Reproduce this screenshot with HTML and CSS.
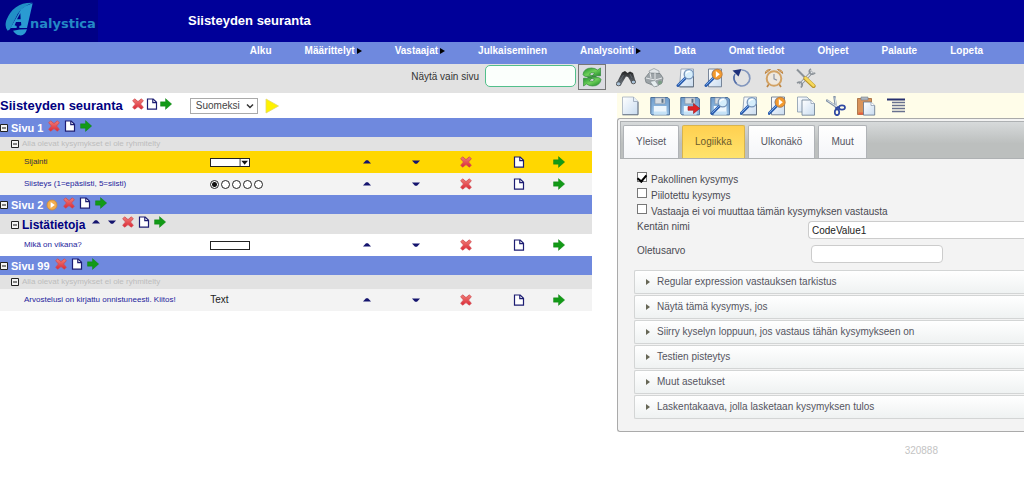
FILE: index.html
```html
<!DOCTYPE html>
<html lang="fi">
<head>
<meta charset="utf-8">
<title>Analystica – Siisteyden seuranta</title>
<meta name="viewport" content="width=device-width, initial-scale=1">
<link rel="stylesheet" href="styles.css">
</head>
<body>
<svg class="sprite" aria-hidden="true">
  <defs>
    <linearGradient id="g-paper" x1="0" y1="0" x2="1" y2="1"><stop offset="0" stop-color="#fff"/><stop offset="1" stop-color="#c9dcf0"/></linearGradient>
    <linearGradient id="g-disk" x1="0" y1="0" x2="0" y2="1"><stop offset="0" stop-color="#6f9ccb"/><stop offset="1" stop-color="#9cc4e8"/></linearGradient>
    <linearGradient id="g-red" x1="0" y1="0" x2="0" y2="1"><stop offset="0" stop-color="#f08078"/><stop offset="1" stop-color="#dc2836"/></linearGradient>
    <linearGradient id="g-green" x1="0" y1="0" x2="1" y2="1"><stop offset="0" stop-color="#1c8f2c"/><stop offset=".5" stop-color="#6fd05a"/><stop offset="1" stop-color="#168424"/></linearGradient>
    <linearGradient id="g-dark" x1="0" y1="0" x2="0" y2="1"><stop offset="0" stop-color="#222"/><stop offset="1" stop-color="#777f88"/></linearGradient>

    <symbol id="i-x" viewBox="0 0 12 12"><path d="M2.6 .8 6 3.6 9.4.8 11.3 2.8 8.5 6l2.8 3.2-1.9 2L6 8.6 2.6 11.2l-1.9-2L3.5 6 .7 2.8Z" fill="url(#g-red)" stroke="#d04a50" stroke-width=".8" stroke-linejoin="round"/></symbol>
    <symbol id="i-page" viewBox="0 0 12 12"><path d="M1.500 1h5.700l3.300 3.200v7H1.500Z" fill="#fff" stroke="#1c1c72" stroke-width="1.200"/><path d="M6.800 1v3.600h3.700" fill="none" stroke="#1c1c72" stroke-width="1.200"/></symbol>
    <symbol id="i-go" viewBox="0 0 12 12"><path d="M.5 3.800h5V.6L11.700 6 5.500 11.400V8.200h-5Z" fill="#129a16" stroke="#0c7d12" stroke-width=".4"/></symbol>
    <symbol id="i-up" viewBox="0 0 12 12"><path d="M2 7.500h8L7 4.300H5Z" fill="#14146e"/></symbol>
    <symbol id="i-down" viewBox="0 0 12 12"><path d="M2 4.500h8L7 7.700H5Z" fill="#14146e"/></symbol>
    <symbol id="i-minus" viewBox="0 0 8 8"><path d="M.5.5h7v7h-7Z" fill="#f4f4f4" stroke="#222"/><path d="M2 4h4" stroke="#111"/></symbol>
    <symbol id="i-playdot" viewBox="0 0 12 12"><circle cx="6" cy="6" r="5" fill="#f3ad4e" stroke="#cf8a36" stroke-width=".8"/><path d="M4.600 3v6L8.800 6Z" fill="#fff"/></symbol>

    <symbol id="i-doc" viewBox="0 0 20 20"><path d="M2.500 1h11l4.500 4.500V18.500H2.500Z" fill="url(#g-paper)" stroke="#a3afbd" stroke-width=".8"/><path d="M2.500 18.800H18V6" fill="none" stroke="#667383" stroke-width="1"/><path d="M13.500 1v4.500H18" fill="#e6eef8" stroke="#97a5b6" stroke-width=".8"/></symbol>
    <symbol id="i-disk" viewBox="0 0 20 20"><path d="M.8 1.500h17l1.600 1.600V18.900H2L.8 17.700Z" fill="url(#g-disk)" stroke="#4c6f99"/><path d="M5 1.800h10v6H5Z" fill="#d6dce2" stroke="#8796a6" stroke-width=".6"/><path d="M11.500 2.800h2v4h-2Z" fill="#5d7287"/><path d="M3.800 10h12.700v8.500H3.800Z" fill="#edf6fd"/><path d="M4 15.500h12.300v3H4Z" fill="#c6e3f7"/></symbol>
    <symbol id="i-diskgo" viewBox="0 0 20 20"><use href="#i-disk"/><path d="M8 10.600h5.500V7.500l6.300 5-6.300 5v-3.200H8Z" fill="#df2224" stroke="#9c1518" stroke-width=".6"/></symbol>
    <symbol id="i-lens" viewBox="0 0 20 20"><path d="M10 9.500 2 17.500" stroke="#2c5eae" stroke-width="3" stroke-linecap="round"/><path d="M9.500 9.500 2.200 16.800" stroke="#7cabea" stroke-width="1"/><circle cx="12.800" cy="6.200" r="4.600" fill="#d5edfb" stroke="#7896bb" stroke-width="1.300"/><path d="M10 5.500q1.500-2.700 4.200-2" fill="none" stroke="#fff" stroke-width="1.300"/></symbol>
    <symbol id="i-disklens" viewBox="0 0 20 20"><use href="#i-disk"/><use href="#i-lens"/></symbol>
    <symbol id="i-find" viewBox="0 0 20 20"><path d="M5 1h12.500v17.800H3.500Z" fill="url(#g-paper)" stroke="#8595a9" stroke-width=".8"/><path d="M3.500 18.900h14V8" fill="none" stroke="#5f6c7d" stroke-width=".9"/><use href="#i-lens"/></symbol>
    <symbol id="i-findplay" viewBox="0 0 20 20"><path d="M4.500 1h13v17.800h-13Z" fill="url(#g-paper)" stroke="#6c7b90" stroke-width=".9"/><use href="#i-lens"/><circle cx="13.200" cy="6.200" r="5" fill="#f39a2d" stroke="#b97d42" stroke-width=".9"/><path d="M11.800 3v6.400l4-3.200Z" fill="#fff"/></symbol>
    <symbol id="i-copy" viewBox="0 0 20 20"><path d="M1.500 1h9.500l3 3v12H1.500Z" fill="url(#g-paper)" stroke="#8798ac" stroke-width=".8"/><path d="M6 4h9l3.500 3.500v11.700H6Z" fill="url(#g-paper)" stroke="#687b91" stroke-width=".8"/><path d="M15 4v3.500h3.500" fill="#fff" stroke="#8798ac" stroke-width=".7"/></symbol>
    <symbol id="i-cut" viewBox="0 0 20 20"><path d="m1 4.500 12 8M8.500.800l1.700 12" stroke="#8494a7" stroke-width="2.400" stroke-linecap="round"/><path d="m1.500 4.500 10 6.500M9 1.500l1.400 10" stroke="#e8eef4" stroke-width=".9"/><ellipse cx="16" cy="11.500" rx="3" ry="2.200" fill="none" stroke="#3049a3" stroke-width="1.700"/><ellipse cx="11" cy="16.300" rx="2.200" ry="2.900" fill="none" stroke="#3049a3" stroke-width="1.700"/><path d="M9.500 12.500 13 11" stroke="#3049a3" stroke-width="2"/></symbol>
    <symbol id="i-paste" viewBox="0 0 20 20"><path d="M1.500 2.500h14v16h-14Z" fill="#d9935a" stroke="#9f6639" stroke-width=".8"/><path d="M2.500 16.500h6v2h-6Z" fill="#e95f3f"/><path d="M5 1h7v3H5Z" fill="#aeb6bf" stroke="#75808b" stroke-width=".6"/><path d="M7.500 6h7.500l3.700 3.500v9.600H7.500Z" fill="url(#g-paper)" stroke="#607189" stroke-width=".8"/><path d="M15 6v3.500h3.700" fill="#fff" stroke="#8798ac" stroke-width=".7"/></symbol>
    <symbol id="i-list" viewBox="0 0 20 20"><path d="M1 3.500h18" stroke="#26306f" stroke-width="2"/><path d="M6 6.500h13M6 9.500h13M6 12.500h13M6 15.500h13" stroke="#68718f" stroke-width="1.400"/></symbol>
    <symbol id="i-refresh" viewBox="0 0 20 20"><path d="M1 7.500Q2 1 9.500 1q3.500 0 6 2L18.500 1v7.800H10l2.700-2.700Q9 4.800 7.300 7.200q3 2.300 7.200 2.500H6Q1.500 9.700 1 7.500Z" fill="url(#g-green)" stroke="#23802d" stroke-width=".6"/><path d="M19 12.500Q18 19 10.500 19q-3.500 0-6-2L1.500 19v-7.800H10l-2.700 2.700q3.700 1.300 5.400-1.100-3-2.300-7.200-2.500H14q4.500 0 5 2.200Z" fill="url(#g-green)" stroke="#23802d" stroke-width=".6"/></symbol>
    <symbol id="i-binoc" viewBox="0 0 20 20"><path d="M6 4.500 9 3l2.500 2L14 3.500l3 1.500 2.500 8-3.800 2.200L12 9l-2-.5-5.500 9.300-4-2.500Z" fill="url(#g-dark)"/><ellipse cx="2.600" cy="15.800" rx="2.400" ry="2" fill="#a9c2d8" stroke="#444" stroke-width=".8"/><ellipse cx="17.400" cy="14" rx="2.200" ry="1.800" fill="#a9c2d8" stroke="#444" stroke-width=".8"/><path d="m7.500 7-3 5M14 6l2 4" stroke="#666e77" stroke-width=".8"/></symbol>
    <symbol id="i-print" viewBox="0 0 20 20"><path d="M6 6 5 3l5-2.500 5 2.500v4Z" fill="#e2e6e8" stroke="#969da2" stroke-width=".8"/><path d="m1 10 4-5 11 .500 3 4.500-1 5-6 3.500-10-4Z" fill="#9da4a8" stroke="#757d82" stroke-width=".8"/><path d="m2 10 9 2 7-2M11 12v6M6 5l1 5M11 5v6" fill="none" stroke="#e6e9ea"/><path d="m6 13.500 5-1 3.500 5-4.500 1.500Z" fill="#e7eef0" stroke="#838b90" stroke-width=".6"/><circle cx="16" cy="14.500" r="2" fill="#7b9d85"/></symbol>
    <symbol id="i-undo" viewBox="0 0 20 20"><path d="M9.500 2a8 8 0 1 1-7.400 6" fill="none" stroke="#8296bd" stroke-width="1.700"/><path d="M4.500 15.500A8 8 0 0 1 3 6" fill="none" stroke="#526da8" stroke-width="1.500"/><path d="M.5 2.500 9.500 1 6.500 8.500Z" fill="#1d2f79"/></symbol>
    <symbol id="i-alarm" viewBox="0 0 20 20"><path d="m5 16-2 3M15 16l2 3" stroke="#bd8646" stroke-width="1.700"/><path d="M1.300 5.500q.2-4 5.200-4ZM18.700 5.500q-.2-4-5.200-4Z" fill="#edc284" stroke="#bd8646"/><circle cx="10" cy="10.500" r="7.300" fill="#eee8df" stroke="#d2a264" stroke-width="2"/><path d="M10 6v4.800l3 1.500" fill="none" stroke="#8a92a1" stroke-width="1.100"/></symbol>
    <symbol id="i-tools" viewBox="0 0 20 20"><path d="M16.500 3.500 4 16.500" stroke="#858c93" stroke-width="3.200"/><path d="M16.500 3.500 4 16.500" stroke="#e5e8ea" stroke-width="1.500"/><path d="M15 .8q-3 2-.8 4.800 2.600 1.700 5-.8M1 15q3-2 5 .5 1 2-1.200 4" fill="none" stroke="#8b9298" stroke-width="1.600"/><path d="m1 1.500 8 8" stroke="#8b9298" stroke-width="2"/><path d="m9.500 10.500 8 7.500" stroke="#b9932a" stroke-width="4.200" stroke-linecap="round"/><path d="m9.500 10 8 7.500" stroke="#f5d85a" stroke-width="2.600" stroke-linecap="round"/></symbol>
  </defs>
</svg>

<header class="banner">
  <a class="logo" href="#" aria-label="Analystica">
    <svg class="logo-mark" viewBox="0 0 90 102" aria-hidden="true">
      <path d="M83 2Q25 0 4 55-2 75 8 86l7-4L38 36Q52 14 83 2Z" fill="#2190c6"/>
      <path fill-rule="evenodd" d="M83 4 66 78H43v-6l6-2-1-10H33l-4 10 6 2v6H16l5-8 27-48Q62 10 83 4ZM36 52h11l-1-18Z" fill="#2a9bd2"/>
      <path d="M24 86q20-4 42-4-6 20-22 18-12-2-20-14Z" fill="#2a9bd2"/>
    </svg>
    <span class="logo-text">nalystica</span>
  </a>
  <h1 class="banner-title">Siisteyden seuranta</h1>
</header>

<nav class="menu">
  <a href="#">Alku</a>
  <a href="#" class="has-sub">Määrittelyt</a>
  <a href="#" class="has-sub">Vastaajat</a>
  <a href="#">Julkaiseminen</a>
  <a href="#" class="has-sub">Analysointi</a>
  <a href="#">Data</a>
  <a href="#">Omat tiedot</a>
  <a href="#">Ohjeet</a>
  <a href="#">Palaute</a>
  <a href="#">Lopeta</a>
</nav>

<div class="toolbar">
  <div class="page-filter">
    <label for="page-only">Näytä vain sivu</label>
    <input id="page-only" class="filter-input" type="text">
    <button class="refresh" type="button" aria-label="Päivitä"><svg><use href="#i-refresh"/></svg></button>
  </div>
  <div class="tool-groups">
    <div class="tool-group">
      <button class="tool" type="button" aria-label="Etsi"><svg><use href="#i-binoc"/></svg></button>
      <button class="tool" type="button" aria-label="Tulosta"><svg><use href="#i-print"/></svg></button>
    </div>
    <div class="tool-group">
      <button class="tool" type="button" aria-label="Esikatsele"><svg><use href="#i-find"/></svg></button>
      <button class="tool" type="button" aria-label="Esikatsele ja testaa"><svg><use href="#i-findplay"/></svg></button>
      <button class="tool" type="button" aria-label="Kumoa"><svg><use href="#i-undo"/></svg></button>
    </div>
    <div class="tool-group">
      <button class="tool" type="button" aria-label="Ajastus"><svg><use href="#i-alarm"/></svg></button>
    </div>
    <div class="tool-group">
      <button class="tool" type="button" aria-label="Työkalut"><svg><use href="#i-tools"/></svg></button>
    </div>
  </div>
</div>

<main class="workspace">
  <section class="outline">
    <div class="survey-head">
      <h2 class="survey-title">Siisteyden seuranta</h2>
      <div class="row-actions">
        <button type="button" aria-label="Poista"><svg><use href="#i-x"/></svg></button>
        <button type="button" aria-label="Uusi"><svg><use href="#i-page"/></svg></button>
        <button type="button" aria-label="Siirry"><svg><use href="#i-go"/></svg></button>
      </div>
      <span class="lang">
        <select aria-label="Kieli"><option>Suomeksi</option></select>
        <svg class="lang-arrow" viewBox="0 0 8 6" aria-hidden="true"><path d="m1 1.500 3 3 3-3" fill="none" stroke="#333" stroke-width="1.500"/></svg>
      </span>
      <button class="play" type="button" aria-label="Käynnistä"><svg viewBox="0 0 14 16"><path d="M1 1v14l12.500-7Z" fill="#fff200" stroke="#e2d968" stroke-width=".8"/></svg></button>
    </div>

    <table class="questions">
      <colgroup><col class="c-name"><col class="c-field"><col class="c-up"><col class="c-down"><col class="c-del"><col class="c-new"><col class="c-go"></colgroup>
      <tbody>
        <tr class="page-row"><th colspan="7"><div class="line">
          <button type="button" class="fold" aria-label="Sulje"><svg><use href="#i-minus"/></svg></button>Sivu 1
          <span class="row-actions">
            <button type="button" aria-label="Poista"><svg><use href="#i-x"/></svg></button>
            <button type="button" aria-label="Uusi"><svg><use href="#i-page"/></svg></button>
            <button type="button" aria-label="Siirry"><svg><use href="#i-go"/></svg></button>
          </span></div></th></tr>
        <tr class="group-row"><th colspan="7"><div class="line">
          <button type="button" class="fold" aria-label="Sulje"><svg><use href="#i-minus"/></svg></button>Alla olevat kysymykset ei ole ryhmitelty</div></th></tr>
        <tr class="question selected">
          <td class="name"><a href="#">Sijainti</a></td>
          <td><span class="mini-select"><select aria-label="Sijainti"><option></option></select><svg viewBox="0 0 10 8" aria-hidden="true"><path d="M.500 0v8" stroke="#222"/><path d="M2 2h7.500L5.750 6.500Z" fill="#111"/></svg></span></td>
          <td><button type="button" aria-label="Ylös"><svg><use href="#i-up"/></svg></button></td>
          <td><button type="button" aria-label="Alas"><svg><use href="#i-down"/></svg></button></td>
          <td><button type="button" aria-label="Poista"><svg><use href="#i-x"/></svg></button></td>
          <td><button type="button" aria-label="Uusi"><svg><use href="#i-page"/></svg></button></td>
          <td><button type="button" aria-label="Siirry"><svg><use href="#i-go"/></svg></button></td>
        </tr>
        <tr class="question shaded">
          <td class="name"><a href="#">Siisteys (1=epäsiisti, 5=siisti)</a></td>
          <td><span class="radios">
            <input type="radio" name="tidy" aria-label="1" checked><input type="radio" name="tidy" aria-label="2"><input type="radio" name="tidy" aria-label="3"><input type="radio" name="tidy" aria-label="4"><input type="radio" name="tidy" aria-label="5"></span></td>
          <td><button type="button" aria-label="Ylös"><svg><use href="#i-up"/></svg></button></td>
          <td><button type="button" aria-label="Alas"><svg><use href="#i-down"/></svg></button></td>
          <td><button type="button" aria-label="Poista"><svg><use href="#i-x"/></svg></button></td>
          <td><button type="button" aria-label="Uusi"><svg><use href="#i-page"/></svg></button></td>
          <td><button type="button" aria-label="Siirry"><svg><use href="#i-go"/></svg></button></td>
        </tr>
        <tr class="page-row"><th colspan="7"><div class="line">
          <button type="button" class="fold" aria-label="Sulje"><svg><use href="#i-minus"/></svg></button>Sivu 2
          <svg class="badge" aria-hidden="true"><use href="#i-playdot"/></svg>
          <span class="row-actions">
            <button type="button" aria-label="Poista"><svg><use href="#i-x"/></svg></button>
            <button type="button" aria-label="Uusi"><svg><use href="#i-page"/></svg></button>
            <button type="button" aria-label="Siirry"><svg><use href="#i-go"/></svg></button>
          </span></div></th></tr>
        <tr class="group-row named"><th colspan="7"><div class="line">
          <button type="button" class="fold" aria-label="Sulje"><svg><use href="#i-minus"/></svg></button>Listätietoja
          <span class="row-actions">
            <button type="button" aria-label="Ylös"><svg><use href="#i-up"/></svg></button>
            <button type="button" aria-label="Alas"><svg><use href="#i-down"/></svg></button>
            <button type="button" aria-label="Poista"><svg><use href="#i-x"/></svg></button>
            <button type="button" aria-label="Uusi"><svg><use href="#i-page"/></svg></button>
            <button type="button" aria-label="Siirry"><svg><use href="#i-go"/></svg></button>
          </span></div></th></tr>
        <tr class="question">
          <td class="name"><a href="#">Mikä on vikana?</a></td>
          <td><input class="mini-text" type="text" aria-label="Mikä on vikana?"></td>
          <td><button type="button" aria-label="Ylös"><svg><use href="#i-up"/></svg></button></td>
          <td><button type="button" aria-label="Alas"><svg><use href="#i-down"/></svg></button></td>
          <td><button type="button" aria-label="Poista"><svg><use href="#i-x"/></svg></button></td>
          <td><button type="button" aria-label="Uusi"><svg><use href="#i-page"/></svg></button></td>
          <td><button type="button" aria-label="Siirry"><svg><use href="#i-go"/></svg></button></td>
        </tr>
        <tr class="page-row"><th colspan="7"><div class="line">
          <button type="button" class="fold" aria-label="Sulje"><svg><use href="#i-minus"/></svg></button>Sivu 99
          <span class="row-actions">
            <button type="button" aria-label="Poista"><svg><use href="#i-x"/></svg></button>
            <button type="button" aria-label="Uusi"><svg><use href="#i-page"/></svg></button>
            <button type="button" aria-label="Siirry"><svg><use href="#i-go"/></svg></button>
          </span></div></th></tr>
        <tr class="group-row"><th colspan="7"><div class="line">
          <button type="button" class="fold" aria-label="Sulje"><svg><use href="#i-minus"/></svg></button>Alla olevat kysymykset ei ole ryhmitelty</div></th></tr>
        <tr class="question shaded">
          <td class="name"><a href="#">Arvostelusi on kirjattu onnistuneesti. Kiitos!</a></td>
          <td class="text-type">Text</td>
          <td><button type="button" aria-label="Ylös"><svg><use href="#i-up"/></svg></button></td>
          <td><button type="button" aria-label="Alas"><svg><use href="#i-down"/></svg></button></td>
          <td><button type="button" aria-label="Poista"><svg><use href="#i-x"/></svg></button></td>
          <td><button type="button" aria-label="Uusi"><svg><use href="#i-page"/></svg></button></td>
          <td><button type="button" aria-label="Siirry"><svg><use href="#i-go"/></svg></button></td>
        </tr>
      </tbody>
    </table>
  </section>

  <section class="editor">
    <div class="edit-tools">
      <button class="tool" type="button" aria-label="Uusi"><svg><use href="#i-doc"/></svg></button>
      <button class="tool" type="button" aria-label="Tallenna"><svg><use href="#i-disk"/></svg></button>
      <button class="tool" type="button" aria-label="Tallenna ja sulje"><svg><use href="#i-diskgo"/></svg></button>
      <button class="tool" type="button" aria-label="Tallenna ja esikatsele"><svg><use href="#i-disklens"/></svg></button>
      <button class="tool narrow" type="button" aria-label="Esikatsele"><svg viewBox="1 0 18 20"><use href="#i-find" width="20" height="20"/></svg></button>
      <button class="tool narrow" type="button" aria-label="Testaa"><svg viewBox="1 0 18 20"><use href="#i-findplay" width="20" height="20"/></svg></button>
      <button class="tool" type="button" aria-label="Kopioi"><svg><use href="#i-copy"/></svg></button>
      <button class="tool" type="button" aria-label="Leikkaa"><svg><use href="#i-cut"/></svg></button>
      <button class="tool" type="button" aria-label="Liitä"><svg><use href="#i-paste"/></svg></button>
      <button class="tool" type="button" aria-label="Luettelo"><svg><use href="#i-list"/></svg></button>
    </div>

    <div class="panel">
      <div class="tabs" role="tablist">
        <button type="button" role="tab" class="tab">Yleiset</button>
        <button type="button" role="tab" class="tab active" aria-selected="true">Logiikka</button>
        <button type="button" role="tab" class="tab">Ulkonäkö</button>
        <button type="button" role="tab" class="tab">Muut</button>
      </div>
      <div class="tab-body">
        <div class="form">
          <label class="check"><input type="checkbox" checked><span>Pakollinen kysymys</span></label>
          <label class="check"><input type="checkbox"><span>Piilotettu kysymys</span></label>
          <label class="check"><input type="checkbox"><span>Vastaaja ei voi muuttaa tämän kysymyksen vastausta</span></label>
          <div class="field"><label for="field-name">Kentän nimi</label><input id="field-name" class="wide" type="text" value="CodeValue1"></div>
          <div class="field"><label for="default-value">Oletusarvo</label><input id="default-value" class="short" type="text"></div>
        </div>
        <div class="accordion">
          <button type="button" aria-expanded="false">Regular expression vastauksen tarkistus</button>
          <button type="button" aria-expanded="false">Näytä tämä kysymys, jos</button>
          <button type="button" aria-expanded="false">Siirry kyselyn loppuun, jos vastaus tähän kysymykseen on</button>
          <button type="button" aria-expanded="false">Testien pisteytys</button>
          <button type="button" aria-expanded="false">Muut asetukset</button>
          <button type="button" aria-expanded="false">Laskentakaava, jolla lasketaan kysymyksen tulos</button>
        </div>
      </div>
    </div>
    <p class="record-id">320888</p>
  </section>
</main>
</body>
</html>
```

FILE: styles.css
```css
* { box-sizing: border-box; }

body {
  margin: 0;
  background: #fff;
  color: #4a4a52;
  font: 10px/14px "Liberation Sans", Arial, sans-serif;
}

button, input, select { font: inherit; color: inherit; }
button { padding: 0; border: 0; background: none; cursor: pointer; }
button svg { display: block; width: 12px; height: 12px; }
a { color: inherit; text-decoration: none; }
h1, h2, p { margin: 0; }
.sprite { position: absolute; width: 0; height: 0; }

/* Banner and menu */
.banner {
  display: grid;
  grid-template-columns: 188px 1fr;
  align-items: center;
  height: 42px;
  background: #000099;
}
.logo {
  display: flex;
  align-items: center;
  width: 98px;
  height: 42px;
  padding-left: 5px;
  background: #000086;
}
.logo-mark { flex: none; width: 30px; height: 34px; margin-bottom: 4px; }
.logo-text {
  margin-left: -5px;
  padding-top: 6px;
  color: #2489c6;
  font: bold 13px/16px "DejaVu Sans", Verdana, sans-serif;
}
.banner-title { color: #fff; font-size: 13px; line-height: 16px; }

.menu {
  display: flex;
  justify-content: space-between;
  height: 22px;
  padding: 2px 4% 0 24.4%;
  background: #6f89de;
  color: #fff;
  font-weight: bold;
}
.has-sub::after {
  content: "";
  display: inline-block;
  margin-left: 2px;
  border: 3px solid transparent;
  border-left: 5px solid #000;
  border-right: 0;
}

/* Toolbar */
.toolbar {
  display: grid;
  grid-template-columns: 606fr 418fr;
  height: 29px;
  background: #e2e2e2;
}
.page-filter { display: flex; justify-content: flex-end; align-items: flex-start; }
.page-filter label { padding: 6px 6px 0 0; color: #333; }
.filter-input {
  width: 91px;
  height: 22px;
  margin: 1px 2px 0 0;
  border: 1px solid #52bf8b;
  border-radius: 5px;
  background: #fbfffc;
}
.refresh {
  display: grid;
  place-items: center;
  width: 28px;
  height: 26px;
  border: 1px solid #777;
  background: #dcdce2;
}
.refresh svg { width: 20px; height: 20px; }
.tool-groups { display: flex; gap: 12px; padding: 4px 0 0 10px; }
.tool-group { display: flex; gap: 8px; }
.tool, .tool svg { width: 20px; height: 20px; }
.tool.narrow, .tool.narrow svg { width: 18px; }

/* Survey outline */
.workspace { display: grid; grid-template-columns: 592fr 407fr; column-gap: 25px; align-items: start; }
.outline { min-width: 0; }
.survey-head { display: flex; align-items: center; height: 25px; }
.survey-title { margin-right: 9px; color: #000080; font-size: 13px; line-height: 16px; }
.row-actions { display: flex; gap: 2px; }
.survey-head .row-actions { padding-bottom: 4px; }
.lang { display: flex; align-items: center; margin-left: 18px; width: 68px; height: 16px; border: 1px solid #aaa; background: #fff; }
.lang select { flex: 1; min-width: 0; height: 14px; padding: 0 0 0 5px; border: 0; background: none; appearance: none; color: #444; }
.lang-arrow { width: 8px; height: 6px; margin-right: 3px; }
.play { margin-left: 7px; }
.play svg { width: 14px; height: 16px; }

.questions { width: 100%; table-layout: fixed; border-collapse: collapse; }
.c-name { width: 35.5%; }
.c-field { width: 22.3%; }
.c-up { width: 8.4%; }
.c-down { width: 8.2%; }
.c-del { width: 8.5%; }
.c-new { width: 9.6%; }
.c-go { width: 7.5%; }
.questions th, .questions td { padding: 0; text-align: left; vertical-align: middle; }
.line { display: flex; align-items: center; gap: 3px; }
.fold, .fold svg { width: 8px; height: 8px; }

.page-row { background: #6f89de; color: #fff; font-size: 11px; }
.page-row .line { height: 19px; padding-top: 1px; }
.badge { width: 12px; height: 12px; }
.line .row-actions { align-self: flex-start; gap: 4px; padding: 1px 0 0 2px; }

.group-row { background: #e2e2e2; color: #bdbdbd; font-size: 8px; }
.group-row th { font-weight: normal; }
.group-row .line { height: 14px; padding-left: 11px; }
.group-row.named { color: #000080; font-size: 12px; }
.group-row.named th { font-weight: bold; }
.group-row.named .line { height: 20px; padding-top: 1px; }

.question { height: 22px; color: #1c1c9c; font-size: 8px; line-height: 12px; }
.question.shaded { background: #f3f3f3; }
.question.selected { background: #ffd700; color: #332a4a; }
.question .name { padding-left: 24px; white-space: nowrap; }
.question td:nth-child(n+3) button { display: block; margin: 0 auto; }
.question td:last-child button { margin: 0 0 0 5px; }
.question .text-type { color: #222; font-size: 10px; }
.mini-select, .mini-text { width: 40px; height: 9px; border: 1px solid #222; background: #fff; }
.mini-select { display: flex; }
.mini-select select { flex: 1; min-width: 0; height: 7px; padding: 0; border: 0; background: none; appearance: none; }
.mini-select svg { width: 10px; height: 7px; }
.mini-text { display: block; padding: 0; }
.radios { display: flex; gap: 2px; }
.radios input {
  width: 9px;
  height: 9px;
  margin: 0;
  appearance: none;
  border: 1px solid #222;
  border-radius: 50%;
  background: #fff;
}
.radios input:checked { background: radial-gradient(circle, #111 0 2px, #fff 3px); }

/* Question editor */
.editor { min-width: 0; }
.edit-tools { display: flex; gap: 10px; height: 25px; padding: 3px 0 0 3px; background: #fffde9; }
.panel {
  padding: 2px 0 12px 2px;
  border: 1px solid #aaa;
  border-right: 0;
  border-radius: 3px 0 0 3px;
  background: #f3f3f3;
}
.tabs {
  display: flex;
  gap: 3px;
  height: 38px;
  padding: 3px 0 0 2px;
  border: 1px solid #aeb1b3;
  border-right: 0;
  background: linear-gradient(#d7dadb, #bcbfbe 60%);
}
.tab {
  padding: 0 12px;
  border: 1px solid #b0b3b7;
  border-bottom: 0;
  border-radius: 2px 2px 0 0;
  background: linear-gradient(#fff, #f4f5f8);
  color: #55555f;
}
.tab.active { border-color: #d8b44e; background: linear-gradient(#ffd050, #ffe36c); color: #6b5a2c; }
.tab-body { padding-left: 14px; }
.form { padding: 13px 0 2px 3px; }
.check { display: flex; gap: 4px; height: 16px; }
.check span { padding-top: 1px; }
.check input {
  display: grid;
  place-items: center;
  width: 10px;
  height: 10px;
  margin: 0;
  appearance: none;
  border: 1px solid #777;
  background: #fff;
}
.check input:checked::before {
  content: "";
  width: 4px;
  height: 7px;
  border: solid #000;
  border-width: 0 2px 2px 0;
  transform: rotate(40deg);
}
.field { display: grid; grid-template-columns: 171px 1fr; height: 24px; }
.field input { height: 18px; margin-top: 1px; padding: 0 3px; border: 1px solid #ccc; border-radius: 4px; background: #fff; color: #222; }
.field .wide { border-right: 0; border-radius: 4px 0 0 4px; }
.field .short { width: 132px; margin-left: 3px; }

.accordion { display: grid; gap: 1px; }
.accordion button {
  display: flex;
  align-items: center;
  gap: 7px;
  height: 24px;
  padding-left: 11px;
  border: 1px solid #d3d5d5;
  border-right: 0;
  border-radius: 2px 0 0 2px;
  background: linear-gradient(#fff, #eff2f2);
  color: #55555f;
}
.accordion button::before {
  content: "";
  border: 3px solid transparent;
  border-left: 4px solid #666655;
  border-right: 0;
}
.record-id { padding: 12px 86px 0 0; color: #c4c4c4; text-align: right; }
```
